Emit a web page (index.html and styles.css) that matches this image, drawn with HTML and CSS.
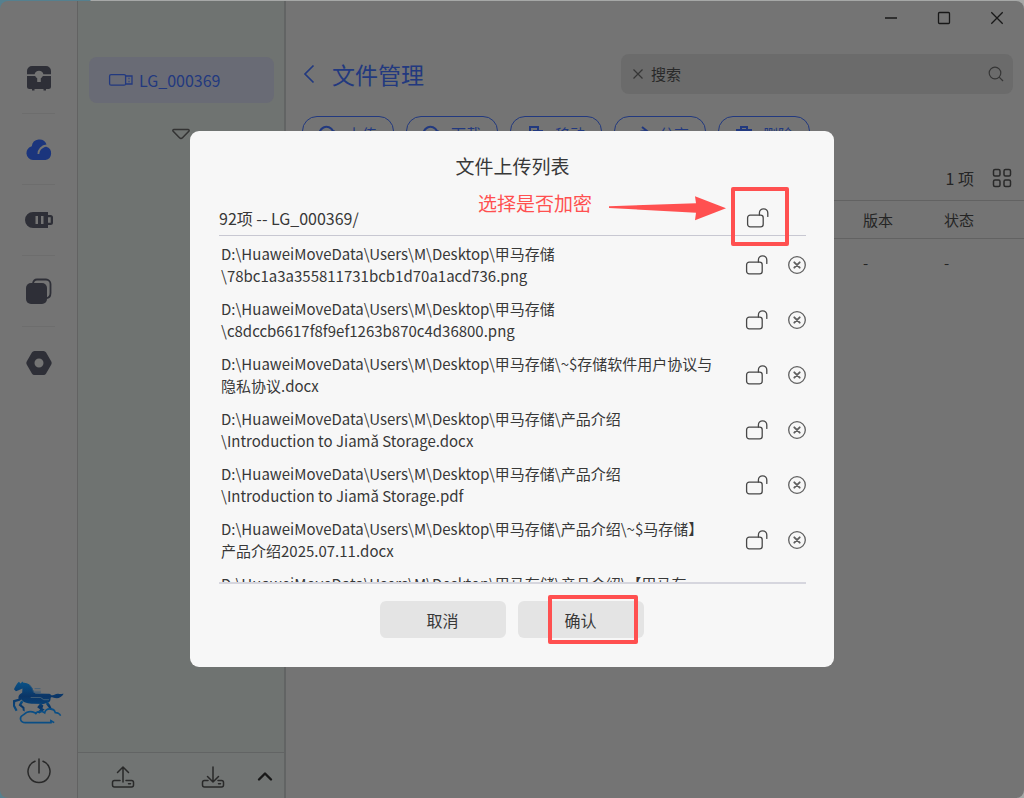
FILE: index.html
```html
<!DOCTYPE html>
<html lang="zh-CN">
<head>
<meta charset="utf-8">
<meta name="viewport" content="width=device-width, initial-scale=1">
<title>文件管理</title>
<link rel="stylesheet" href="styles.css">
</head>
<body>
<svg class="defs" aria-hidden="true">
  <symbol id="lock" viewBox="0 0 24 20"><rect x="1.6" y="7.2" width="15.6" height="11.6" rx="2.6"/><path d="M13.4 7V5a4.2 4.2 0 0 1 8.4 0v3.4"/></symbol>
  <symbol id="remove" viewBox="0 0 18 18"><circle cx="9" cy="9" r="8.3"/><path class="cross" d="M6.300 6.300l5.400 5.400M11.700 6.300l-5.400 5.400"/></symbol>
</svg>

<div class="app">
  <nav class="rail" aria-label="主导航">
    <ul class="rail-list">
      <li><button class="rail-btn" aria-label="设备"><svg viewBox="0 0 28 28" width="28" height="28"><path d="M2 10.3V7a5 5 0 0 1 5-5h14a5 5 0 0 1 5 5v3.3h-7.6A4.5 4.5 0 0 0 9.600 10.300z"/><path d="M2 12h8.200c.3 1 1 1.800 2 2.300V18h3.600v-3.700c1-.5 1.700-1.300 2-2.300H26v10.500a2.500 2.500 0 0 1-2.500 2.500H21v1.500h-2.500V25h-9v1.500H7V25H4.500A2.500 2.500 0 0 1 2 22.500z"/></svg></button></li>
      <li><button class="rail-btn active" aria-label="文件管理"><svg viewBox="0 0 28 28" width="28" height="28"><path d="M12.500 25H8A7 7 0 0 1 6.800 11.200 7.600 7.600 0 0 1 21.500 9.500 9.500 9.500 0 0 0 12.500 19h1.800c.3-3.600 2.800-6.500 7-7.200A6.800 6.800 0 0 1 20.500 25z"/></svg></button></li>
      <li><button class="rail-btn" aria-label="存储"><svg viewBox="0 0 28 28" width="28" height="28"><path fill-rule="evenodd" d="M8 6h15v3h2.500A2.500 2.500 0 0 1 28 11.500v5a2.500 2.500 0 0 1-2.500 2.500H23v3H8A8 8 0 0 1 8 6zm2.500 4v8h2.500v-8zm5.500 0v8h2.500v-8zm7 1.200v5.600h2.700v-5.600z"/></svg></button></li>
      <li><button class="rail-btn" aria-label="副本"><svg viewBox="0 0 28 28" width="28" height="28"><path d="M8 6.500C8.400 3.800 9.800 2.500 12 2.500h9A4.500 4.500 0 0 1 25.500 7v9c0 3-1.500 5-4.500 5.300" fill="none" stroke="currentColor" stroke-width="1.800"/><rect x="1" y="6" width="21" height="21" rx="5"/></svg></button></li>
      <li><button class="rail-btn" aria-label="设置"><svg viewBox="0 0 28 28" width="28" height="28"><path fill-rule="evenodd" d="M9.500 2h9a3 3 0 0 1 2.600 1.500l5.200 9a3 3 0 0 1 0 3l-5.200 9a3 3 0 0 1-2.600 1.500h-9a3 3 0 0 1-2.600-1.500l-5.200-9a3 3 0 0 1 0-3l5.200-9A3 3 0 0 1 9.500 2zM14 9.500a4.500 4.500 0 1 0 0 9 4.500 4.500 0 0 0 0-9z"/></svg></button></li>
    </ul>
    <div class="rail-foot">
      <svg class="logo" viewBox="40 58 156 140" width="51" height="46" role="img" aria-label="甲马存储">
        <defs><linearGradient id="horse" x1="0" y1="0" x2="0" y2="1"><stop offset="0" stop-color="#0a5388"/><stop offset=".5" stop-color="#0b3566"/><stop offset="1" stop-color="#084a80"/></linearGradient></defs>
        <g fill="url(#horse)"><path d="M61 66l3 2 4-6 4 4c12-1 22 6 27 16 4 8 4 14 10 17l36 1c5-1 9 0 12 4 10 3 12-6 22-4 6 2 10-1 16 0-8 14-20 16-33 11-5-1-7 0-7 4 0 9-5 12-12 13l-10 3-30-1c-16 0-32-4-37-13l-5 4-14 4-1 10 8 15-6 3-10-19 1-14 18-5c-2-9 3-14 11-18l1-13-12 5-8 3-6-6c4-9 7-15 15-23z"/><path d="M72 124l-6 9 9 8 1 13-6-3-1-7-12-9 8-15zM124 128l9 8-3 8 7 4-16 12-7-3 9-9-9-7zM145 123l8 10 8 18-7-2-13-18z"/></g>
        <path d="M94 111h30l10 7h16" fill="none" stroke="#5f747f" stroke-width="2"/>
        <path d="M90 74l8 8 5 14h22M106 84h18M103 92h22" fill="none" stroke="#31587a" stroke-width="2"/>
        <path d="M166 188l-10-6v6H78c-17 0-19-16-9-22 7-4 9-8 14-10 11-4 24 0 29 6M110 158c8-5 20-5 27 0 2-8 8-12 15-12 9 0 16 4 17 11l9 2c5 2 7 4 7 8" fill="none" stroke="#0a4e85" stroke-width="5"/>
      </svg>
      <button class="line-btn" aria-label="退出"><svg viewBox="0 0 26 26" width="26" height="26"><path d="M9 3.300a11 11 0 1 0 8 0M13 1v14"/></svg></button>
    </div>
  </nav>

  <aside class="side">
    <button class="device"><svg viewBox="0 0 26 14" width="26" height="14"><rect x="1.600" y="1.600" width="16" height="10.600" rx="1.500"/><path d="M18 3h6v8h-6"/><path d="M20.500 5.500h1M20.500 8.500h1"/></svg><span>LG_000369</span></button>
    <svg class="caret" viewBox="0 0 20 12" width="20" height="12"><path d="M3 1.500h14c1 0 1.500 1 .8 1.800l-6.300 6.500c-1 1-2 1-3 0L2.200 3.300C1.500 2.500 2 1.500 3 1.500z"/></svg>
    <div class="side-foot">
      <button class="line-btn" aria-label="上传列表"><svg viewBox="0 0 24 24" width="24" height="24"><path d="M12 17V2M6.500 7.500L12 2l5.500 5.500M9 15.500H3.500a2 2 0 0 0-2 2V20a2 2 0 0 0 2 2h17a2 2 0 0 0 2-2v-2.500a2 2 0 0 0-2-2H15M17.500 18.700h2"/></svg></button>
      <button class="line-btn" aria-label="下载列表"><svg viewBox="0 0 24 24" width="24" height="24"><path d="M12 2v15M6.500 11.500L12 17l5.500-5.500M7 15.500H3.500a2 2 0 0 0-2 2V20a2 2 0 0 0 2 2h17a2 2 0 0 0 2-2v-2.500a2 2 0 0 0-2-2H17M17.500 18.700h2"/></svg></button>
      <button class="line-btn bold" aria-label="展开"><svg viewBox="0 0 16 24" width="16" height="24"><path d="M2 14.500l6-6 6 6"/></svg></button>
    </div>
  </aside>

  <main class="main">
    <div class="win">
      <button aria-label="最小化"><svg viewBox="0 0 14 14" width="14" height="14"><path d="M1 7h12"/></svg></button>
      <button aria-label="最大化"><svg viewBox="0 0 14 14" width="14" height="14"><rect x="1.500" y="1.500" width="11" height="11" rx="1"/></svg></button>
      <button aria-label="关闭"><svg viewBox="0 0 14 14" width="14" height="14"><path d="M1.300 1.300l11.400 11.400M12.700 1.300L1.300 12.700"/></svg></button>
    </div>
    <header class="head">
      <button class="back" aria-label="返回"><svg viewBox="0 0 12 20" width="12" height="20"><path d="M10.500 1.500L2 10l8.500 8.500"/></svg></button>
      <h1>文件管理</h1>
      <div class="search">
        <button aria-label="清除"><svg viewBox="0 0 12 12" width="12" height="12"><path d="M1.500 1.500l9 9M10.500 1.500l-9 9"/></svg></button>
        <input type="text" placeholder="搜索" aria-label="搜索">
        <button aria-label="搜索文件"><svg viewBox="0 0 16 16" width="16" height="16"><circle cx="7" cy="7" r="5.800"/><path d="M11.200 11.200l3.800 3.800"/></svg></button>
      </div>
    </header>
    <div class="tools">
      <button><svg viewBox="0 0 18 18" width="18" height="18"><path d="M1 12a7 7 0 0 1 13-6c2 0 3 3 3 5M9 16V9M6 12l3-3 3 3"/></svg><span>上传</span></button>
      <button><svg viewBox="0 0 18 18" width="18" height="18"><path d="M1 12a7 7 0 0 1 13-6c2 0 3 3 3 5M9 9v7M6 13l3 3 3-3"/></svg><span>下载</span></button>
      <button><svg viewBox="0 0 18 18" width="18" height="18"><path d="M6 12H3V2h8v4M7 6h8v10H7z"/></svg><span>移动</span></button>
      <button><svg viewBox="0 0 18 18" width="18" height="18"><path d="M11 2l5 4-5 4M15 6C8 6 4 8 3 14"/></svg><span>分享</span></button>
      <button><svg viewBox="0 0 18 18" width="18" height="18"><path d="M1 5h16M6 5V2h6v3M4 5v11h10V5M7 8v5M11 8v5"/></svg><span>删除</span></button>
    </div>
    <div class="count"><span>1 项</span><button class="line-btn" aria-label="网格视图"><svg viewBox="0 0 20 20" width="20" height="20"><rect x="1.500" y="1.500" width="6.500" height="6.500" rx="1.500"/><rect x="12" y="1.500" width="6.500" height="6.500" rx="1.500"/><rect x="1.500" y="12" width="6.500" height="6.500" rx="1.500"/><rect x="12" y="12" width="6.500" height="6.500" rx="1.500"/></svg></button></div>
    <table class="files">
      <thead><tr><td></td><th scope="col">版本</th><th scope="col">状态</th></tr></thead>
      <tbody><tr><td></td><td>-</td><td>-</td></tr></tbody>
    </table>
  </main>
</div>

<div class="overlay">
  <section class="dialog" role="dialog" aria-modal="true" aria-labelledby="dlg-title">
    <h2 id="dlg-title">文件上传列表</h2>
    <div class="summary"><span>92项 -- LG_000369/</span><button class="lock" aria-label="全部加密"><svg width="24" height="20"><use href="#lock"/></svg></button></div>
    <ul class="uploads">
      <li><span class="path">D:\HuaweiMoveData\Users\M\Desktop\甲马存储<br>\78bc1a3a355811731bcb1d70a1acd736.png</span><button class="lock" aria-label="加密"><svg width="24" height="20"><use href="#lock"/></svg></button><button class="remove" aria-label="移除"><svg width="18" height="18"><use href="#remove"/></svg></button></li>
      <li><span class="path">D:\HuaweiMoveData\Users\M\Desktop\甲马存储<br>\c8dccb6617f8f9ef1263b870c4d36800.png</span><button class="lock" aria-label="加密"><svg width="24" height="20"><use href="#lock"/></svg></button><button class="remove" aria-label="移除"><svg width="18" height="18"><use href="#remove"/></svg></button></li>
      <li><span class="path">D:\HuaweiMoveData\Users\M\Desktop\甲马存储\~$存储软件用户协议与<br>隐私协议.docx</span><button class="lock" aria-label="加密"><svg width="24" height="20"><use href="#lock"/></svg></button><button class="remove" aria-label="移除"><svg width="18" height="18"><use href="#remove"/></svg></button></li>
      <li><span class="path">D:\HuaweiMoveData\Users\M\Desktop\甲马存储\产品介绍<br>\Introduction to Jiamǎ Storage.docx</span><button class="lock" aria-label="加密"><svg width="24" height="20"><use href="#lock"/></svg></button><button class="remove" aria-label="移除"><svg width="18" height="18"><use href="#remove"/></svg></button></li>
      <li><span class="path">D:\HuaweiMoveData\Users\M\Desktop\甲马存储\产品介绍<br>\Introduction to Jiamǎ Storage.pdf</span><button class="lock" aria-label="加密"><svg width="24" height="20"><use href="#lock"/></svg></button><button class="remove" aria-label="移除"><svg width="18" height="18"><use href="#remove"/></svg></button></li>
      <li><span class="path">D:\HuaweiMoveData\Users\M\Desktop\甲马存储\产品介绍\~$马存储】<br>产品介绍2025.07.11.docx</span><button class="lock" aria-label="加密"><svg width="24" height="20"><use href="#lock"/></svg></button><button class="remove" aria-label="移除"><svg width="18" height="18"><use href="#remove"/></svg></button></li>
      <li><span class="path">D:\HuaweiMoveData\Users\M\Desktop\甲马存储\产品介绍\【甲马存</span></li>
    </ul>
    <div class="actions"><button>取消</button><button>确认</button></div>

    <p class="note">选择是否加密</p>
    <svg class="arrow" viewBox="0 0 118 25" width="118" height="25" aria-hidden="true"><path d="M0 10.200L87 7.300 86 .2 117 12.300 86 24.300 87 16.700 0 12z"/></svg>
    <div class="mark mark-lock"></div>
    <div class="mark mark-ok"></div>
  </section>
</div>
</body>
</html>
```
FILE: styles.css
```css
* { box-sizing: border-box; }

body {
  margin: 0;
  min-height: 100vh;
  padding-top: 1px;
  background: linear-gradient(90deg, #55808f 0, #55808f 90px, #a6a8a7 91px, #a6a8a7 100%);
  font-family: "Noto Sans CJK SC", sans-serif;
  font-size: 15px;
  line-height: 22px;
  color: #252525;
}

button {
  border: 0;
  padding: 0;
  background: none;
  font: inherit;
  color: inherit;
}

button svg { display: block; }
h1, h2, p, ul { margin: 0; padding: 0; font-weight: 400; }
ul { list-style: none; }
.defs { position: absolute; width: 0; height: 0; }

.app {
  display: grid;
  grid-template-columns: 78px 208px 1fr;
  height: calc(100vh - 1px);
  border-radius: 8px;
  overflow: hidden;
  background: #747474;
}

/* Icon rail */
.rail {
  display: flex;
  flex-direction: column;
  justify-content: space-between;
  align-items: center;
  padding: 42px 0 14px;
  border-right: 1px solid #626262;
}
.rail-list li {
  display: grid;
  place-items: center;
  width: 33px;
  height: 71px;
  border-bottom: 1px solid #6d6d6d;
}
.rail-list li:last-child { border-bottom: 0; }
.rail-btn { color: #2e2f37; }
.rail-btn svg { fill: currentColor; }
.rail-btn.active { color: #1b357d; }
.rail-foot {
  display: flex;
  flex-direction: column;
  align-items: center;
  gap: 32px;
}
.line-btn svg {
  fill: none;
  stroke: #292929;
  stroke-width: 1.5;
  stroke-linecap: round;
  stroke-linejoin: round;
}
.line-btn.bold svg { stroke: #181818; stroke-width: 2.4; }

/* Device column */
.side {
  display: flex;
  flex-direction: column;
  background: #6f7371;
  border-right: 2px solid #626464;
}
.device {
  display: flex;
  align-items: center;
  gap: 5px;
  height: 46px;
  margin: 56px 10px 0 11px;
  padding-left: 19px;
  border-radius: 8px;
  background: #696b75;
  color: #22397f;
  font-size: 16px;
}
.device svg {
  fill: none;
  stroke: currentColor;
  stroke-width: 1.3;
}
.caret {
  align-self: center;
  margin-top: 25px;
  fill: none;
  stroke: #333;
  stroke-width: 1.5;
}
.side-foot {
  display: flex;
  align-items: center;
  gap: 66px;
  height: 46px;
  margin-top: auto;
  padding: 3px 11px 0 33px;
  background: #717473;
  border-top: 1px solid #626464;
}
.side-foot .bold { margin-left: -34px; }

/* File manager */
.win {
  display: flex;
  justify-content: flex-end;
  gap: 39px;
  padding: 10px 20px 0 0;
}
.win svg { fill: none; stroke: #181818; stroke-width: 1.3; }
.head {
  display: flex;
  align-items: center;
  padding: 29px 11px 0 17px;
}
.back svg { fill: none; stroke: #22397f; stroke-width: 1.7; }
.head h1 {
  margin-left: 17px;
  font-size: 23px;
  line-height: 32px;
  color: #22397f;
}
.search {
  display: flex;
  align-items: center;
  gap: 7px;
  width: 392px;
  height: 40px;
  margin-left: auto;
  padding: 0 9px 0 11px;
  border-radius: 8px;
  background: #6b6b6b;
}
.search svg { fill: none; stroke: #363636; stroke-width: 1.2; }
.search input {
  flex: 1;
  min-width: 0;
  padding: 0;
  border: 0;
  background: none;
  font: inherit;
}
.search input::placeholder { color: #292929; opacity: 1; }
.tools {
  display: flex;
  gap: 12px;
  padding: 22px 16px 0;
}
.tools button {
  display: flex;
  align-items: center;
  justify-content: center;
  gap: 10px;
  width: 92px;
  height: 35px;
  border: 1px solid #22397f;
  border-radius: 15px;
  color: #22397f;
  font-size: 15px;
}
.tools svg { fill: none; stroke: currentColor; stroke-width: 2; }
.count {
  display: flex;
  align-items: center;
  justify-content: flex-end;
  gap: 18px;
  padding: 16px 12px 11px;
  font-size: 16px;
}
.files {
  width: 100%;
  table-layout: fixed;
  border-collapse: collapse;
}
.files tr > * {
  height: 38px;
  padding: 0;
  border-top: 1px solid #626262;
  font-weight: 400;
  text-align: left;
}
.files tr > :nth-child(2) { width: 81px; }
.files tr > :nth-child(3) { width: 80px; }
.files tbody td { height: 48px; }

/* Upload dialog */
.overlay {
  position: fixed;
  inset: 0;
  display: grid;
  place-items: center;
}
.dialog {
  position: relative;
  width: 644px;
  max-width: 100%;
  padding: 20px 28px 29px 29px;
  border-radius: 9px;
  background: #f7f7f7;
  color: #383838;
}
.dialog h2 {
  font-size: 19px;
  line-height: 30px;
  text-align: center;
}
.summary {
  display: flex;
  align-items: center;
  justify-content: space-between;
  height: 55px;
  padding: 19px 36px 0 0;
  border-bottom: 1px solid #c8c8d2;
  font-size: 16px;
}
.lock svg, .remove svg {
  fill: none;
  stroke: #484848;
  stroke-width: 1.3;
  stroke-linecap: round;
}
.remove svg { stroke: #606060; }
.cross { stroke-width: 1.9; }
.uploads {
  display: flex;
  flex-direction: column;
  gap: 11px;
  height: 348px;
  padding: 7px 0 0 2px;
  overflow: hidden;
  border-bottom: 2px solid #d6d6de;
}
.uploads li {
  display: flex;
  flex: none;
  align-items: center;
}
.path { width: 502px; }
.uploads .lock { margin-left: 22px; }
.uploads .remove { margin-left: 19px; }
.actions {
  display: flex;
  justify-content: center;
  gap: 12px;
  padding: 17px 2px 0 0;
}
.actions button {
  width: 126px;
  height: 37px;
  border-radius: 6px;
  background: #e4e4e4;
  font-size: 16px;
}

/* Guide annotations drawn over the dialog */
.note, .arrow, .mark { position: absolute; }
.note {
  top: 60px;
  left: 288px;
  font-size: 19px;
  line-height: 24px;
  color: #ff5050;
}
.arrow { top: 65px; left: 419px; fill: #ff5050; }
.mark { border: 4px solid #ff5050; border-radius: 2px; }
.mark-lock { top: 56px; left: 541px; width: 58px; height: 59px; }
.mark-ok { top: 464px; left: 358px; width: 90px; height: 49px; }
```
